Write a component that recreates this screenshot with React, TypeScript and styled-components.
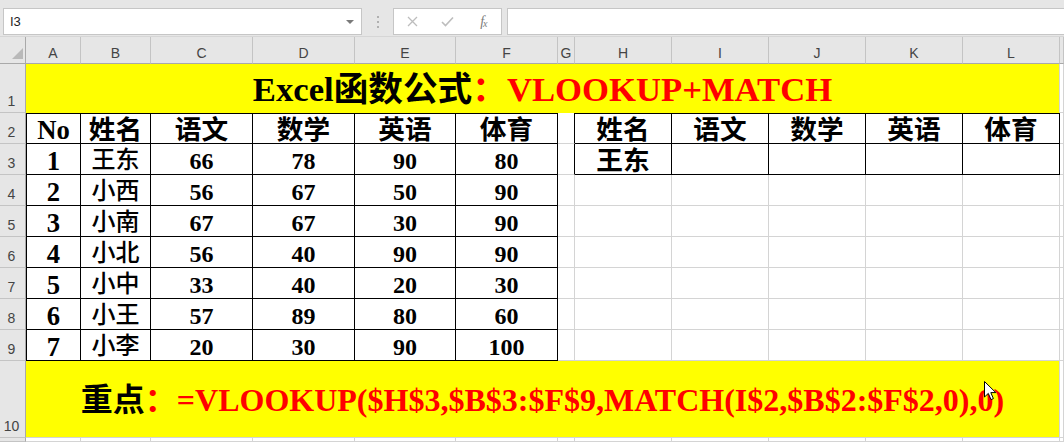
import React from "react";
import styled, { createGlobalStyle } from "styled-components";

const GRID = "#d4d4d4";
const INK = "#000";
const YELLOW = "#ffff00";
const RED = "#ff0000";
const CHROME = "#e6e6e6";
const SERIF = `"Liberation Serif", "Noto Sans CJK SC", serif`;
const UI = `"Liberation Sans", "Noto Sans", sans-serif`;

const COLUMNS = [
  { key: "A", width: 55 },
  { key: "B", width: 70 },
  { key: "C", width: 102 },
  { key: "D", width: 102 },
  { key: "E", width: 101 },
  { key: "F", width: 102 },
  { key: "G", width: 17 },
  { key: "H", width: 97 },
  { key: "I", width: 97 },
  { key: "J", width: 97 },
  { key: "K", width: 97 },
  { key: "L", width: 97 },
];

const HEADS = ["姓名", "语文", "数学", "英语", "体育"];

const STUDENTS = [
  { no: 1, name: "王东", scores: [66, 78, 90, 80] },
  { no: 2, name: "小西", scores: [56, 67, 50, 90] },
  { no: 3, name: "小南", scores: [67, 67, 30, 90] },
  { no: 4, name: "小北", scores: [56, 40, 90, 90] },
  { no: 5, name: "小中", scores: [33, 40, 20, 30] },
  { no: 6, name: "小王", scores: [57, 89, 80, 60] },
  { no: 7, name: "小李", scores: [20, 30, 90, 100] },
];

type Line = "grid" | "ink" | "none";
const lineColor = (l: Line = "grid") =>
  l === "ink" ? INK : l === "none" ? "transparent" : GRID;

const GlobalStyle = createGlobalStyle`
  html, body {
    margin: 0;
    padding: 0;
    background: #fff;
    overflow: hidden;
  }
`;

const Window = styled.div`
  position: relative;
  width: 1064px;
  height: 442px;
  overflow: hidden;
  background: #fff;
`;

const Toolbar = styled.div`
  box-sizing: border-box;
  height: 37px;
  display: flex;
  align-items: flex-start;
  padding: 8px 0 0 3px;
  background: ${CHROME};
  border-bottom: 1px solid #d6d6d6;
`;

const NameBox = styled.div`
  box-sizing: border-box;
  width: 359px;
  height: 27px;
  display: flex;
  align-items: center;
  justify-content: space-between;
  padding: 0 7px 0 6px;
  background: #fff;
  border: 1px solid #c6c6c6;
  font-family: ${UI};
  font-size: 13px;
  color: #222;
`;

const DropArrow = styled.span`
  width: 0;
  height: 0;
  border-left: 4px solid transparent;
  border-right: 4px solid transparent;
  border-top: 4px solid #7a7a7a;
`;

const Grip = styled.div`
  width: 31px;
  height: 27px;
  display: flex;
  flex-direction: column;
  align-items: center;
  justify-content: center;
  gap: 3px;
  span {
    width: 2px;
    height: 2px;
    background: #b0b0b0;
  }
`;

const ActionBox = styled.div`
  box-sizing: border-box;
  width: 109px;
  height: 27px;
  display: flex;
  padding-left: 1px;
  background: #fff;
  border: 1px solid #c6c6c6;
`;

const ActionSlot = styled.div`
  width: 36px;
  display: flex;
  align-items: center;
  justify-content: center;
`;

const Fx = styled.span`
  font-family: ${SERIF};
  font-style: italic;
  font-size: 14px;
  color: #7c7c7c;
  letter-spacing: -1px;
  sub {
    font-size: 10px;
    vertical-align: -1px;
  }
`;

const FormulaInput = styled.div`
  flex: 1;
  height: 27px;
  margin: 0 -2px 0 5px;
  background: #fff;
  border: 1px solid #c6c6c6;
  box-sizing: border-box;
`;

const Sheet = styled.div`
  display: grid;
  grid-template-columns: 26px ${COLUMNS.map((c) => `${c.width}px`).join(" ")} 1fr;
  grid-template-rows: 27px 49px repeat(8, 31px) 77px 1fr;
  height: 405px;
`;

const Corner = styled.div`
  position: relative;
  box-sizing: border-box;
  background: ${CHROME};
  border-right: 1px solid #a9a9a9;
  border-bottom: 1px solid #a9a9a9;
  svg {
    position: absolute;
    left: 12px;
    top: 11px;
  }
`;

const ColHead = styled.div`
  box-sizing: border-box;
  display: flex;
  align-items: flex-end;
  justify-content: center;
  padding-bottom: 2px;
  background: ${CHROME};
  border-right: 1px solid #c4c4c4;
  border-bottom: 1px solid #a9a9a9;
  font-family: ${UI};
  font-size: 14px;
  color: #444;
`;

const RowHead = styled.div`
  box-sizing: border-box;
  display: flex;
  align-items: flex-end;
  justify-content: center;
  padding: 0 2px 3px 0;
  background: ${CHROME};
  border-right: 1px solid #a9a9a9;
  border-bottom: 1px solid #c4c4c4;
  font-family: ${UI};
  font-size: 14px;
  color: #444;
  overflow: hidden;
`;

const Cell = styled.div<{
  $fill?: string;
  $r?: Line;
  $b?: Line;
  $t?: boolean;
  $l?: boolean;
  $span?: number;
}>`
  box-sizing: border-box;
  display: flex;
  align-items: center;
  justify-content: center;
  overflow: hidden;
  white-space: nowrap;
  background: ${(p) => p.$fill ?? "#fff"};
  border-right: 1px solid ${(p) => lineColor(p.$r)};
  border-bottom: 1px solid ${(p) => lineColor(p.$b)};
  border-top: ${(p) => (p.$t ? `1px solid ${INK}` : "none")};
  border-left: ${(p) => (p.$l ? `1px solid ${INK}` : "none")};
  grid-column: ${(p) => (p.$span ? `span ${p.$span}` : "auto")};
  font-family: ${SERIF};
  color: #000;
`;

const Text = styled.span<{ $size: number; $weight?: number; $drop?: number }>`
  font-size: ${(p) => p.$size}px;
  font-weight: ${(p) => p.$weight ?? 700};
  line-height: 1;
  position: relative;
  top: ${(p) => p.$drop ?? 0}px;
`;

const Red = styled.span`
  color: ${RED};
`;

const Pointer = styled.svg`
  position: absolute;
  left: 984px;
  top: 381px;
`;

const XIcon = () => (
  <svg width="11" height="11" viewBox="0 0 11 11">
    <path d="M1 1 L10 10 M10 1 L1 10" stroke="#bdbdbd" strokeWidth="1.3" fill="none" />
  </svg>
);

const CheckIcon = () => (
  <svg width="13" height="11" viewBox="0 0 13 11">
    <path d="M1 6 L4.5 9.5 L12 1.5" stroke="#bdbdbd" strokeWidth="1.6" fill="none" />
  </svg>
);

const gridRowCells = (row: number, fromCol = 0) =>
  Array.from({ length: 13 - fromCol }, (_, i) => <Cell key={`${row}-g${i}`} />);

export default function App() {
  return (
    <Window>
      <GlobalStyle />
      <Toolbar>
        <NameBox>
          I3
          <DropArrow />
        </NameBox>
        <Grip>
          <span />
          <span />
          <span />
        </Grip>
        <ActionBox>
          <ActionSlot>
            <XIcon />
          </ActionSlot>
          <ActionSlot>
            <CheckIcon />
          </ActionSlot>
          <ActionSlot>
            <Fx>
              f<sub>x</sub>
            </Fx>
          </ActionSlot>
        </ActionBox>
        <FormulaInput />
      </Toolbar>

      <Sheet>
        <Corner>
          <svg width="11" height="11" viewBox="0 0 11 11">
            <path d="M11 0 L11 11 L0 11 Z" fill="#b9b9b9" />
          </svg>
        </Corner>
        {COLUMNS.map((c) => (
          <ColHead key={c.key}>{c.key}</ColHead>
        ))}
        <ColHead />

        {/* row 1: title */}
        <RowHead>1</RowHead>
        <Cell $span={12} $fill={YELLOW} $b="none">
          <Text $size={34.67} $drop={1}>
            Excel函数公式<Red>：VLOOKUP+MATCH</Red>
          </Text>
        </Cell>
        <Cell />

        {/* row 2: headers */}
        <RowHead>2</RowHead>
        <Cell $l $t $r="ink" $b="ink">
          <Text $size={26.67} $drop={2}>
            No
          </Text>
        </Cell>
        {HEADS.map((h) => (
          <Cell key={`l-${h}`} $t $r="ink" $b="ink">
            <Text $size={26.67} $drop={2}>
              {h}
            </Text>
          </Cell>
        ))}
        <Cell $r="ink" />
        {HEADS.map((h) => (
          <Cell key={`r-${h}`} $t $r="ink" $b="ink">
            <Text $size={26.67} $drop={2}>
              {h}
            </Text>
          </Cell>
        ))}
        <Cell />

        {/* rows 3-9: data */}
        {STUDENTS.map((s, idx) => (
          <React.Fragment key={s.no}>
            <RowHead>{idx + 3}</RowHead>
            <Cell $l $r="ink" $b="ink">
              <Text $size={26.67} $drop={2}>
                {s.no}
              </Text>
            </Cell>
            <Cell $r="ink" $b="ink">
              <Text $size={24} $weight={500} $drop={1}>
                {s.name}
              </Text>
            </Cell>
            {s.scores.map((v, i) => (
              <Cell key={i} $r="ink" $b="ink">
                <Text $size={24} $drop={1.5}>
                  {v}
                </Text>
              </Cell>
            ))}
            {idx === 0 ? (
              <>
                <Cell $r="ink" />
                <Cell $r="ink" $b="ink">
                  <Text $size={26.67} $drop={2}>
                    {s.name}
                  </Text>
                </Cell>
                {[0, 1, 2, 3].map((i) => (
                  <Cell key={`q${i}`} $r="ink" $b="ink" />
                ))}
                <Cell />
              </>
            ) : (
              gridRowCells(idx + 3, 6)
            )}
          </React.Fragment>
        ))}

        {/* row 10: formula */}
        <RowHead>10</RowHead>
        <Cell $span={12} $fill={YELLOW}>
          <Text $size={32} $drop={1}>
            重点
            <Red>：=VLOOKUP($H$3,$B$3:$F$9,MATCH(I$2,$B$2:$F$2,0),0)</Red>
          </Text>
        </Cell>
        <Cell />

        {/* row 11 */}
        <RowHead />
        {gridRowCells(11)}
      </Sheet>

      <Pointer width="13" height="20" viewBox="0 0 13 20">
        <path
          d="M0.5 0.5 L0.5 16 L4.3 12.4 L7 18.6 L9.4 17.6 L6.8 11.6 L11.8 11.6 Z"
          fill="#fff"
          stroke="#000"
          strokeWidth="1"
        />
      </Pointer>
    </Window>
  );
}
